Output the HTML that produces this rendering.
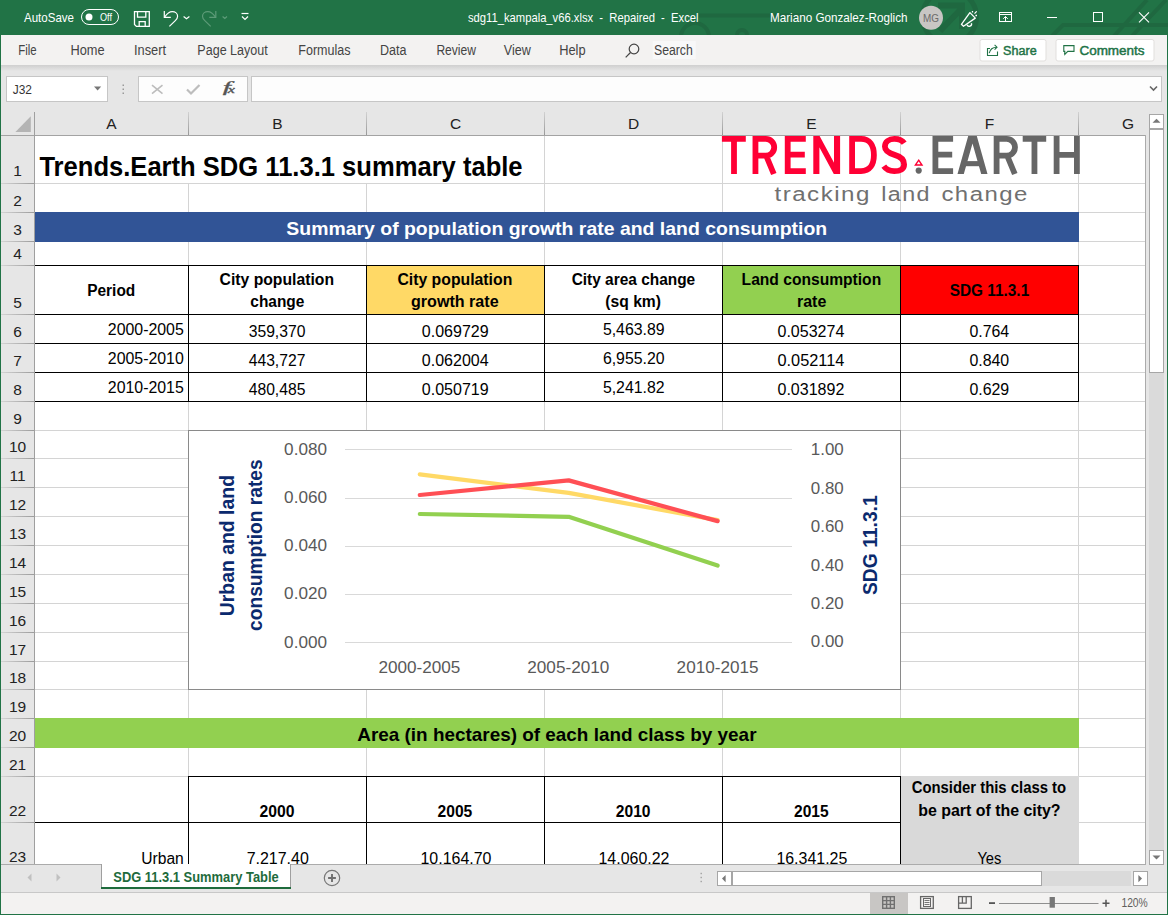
<!DOCTYPE html>
<html><head><meta charset="utf-8"><title>sdg11_kampala_v66.xlsx - Repaired - Excel</title>
<style>html,body{margin:0;padding:0;width:1168px;height:915px;overflow:hidden;background:#e6e6e6;font-family:"Liberation Sans",sans-serif;}</style>
</head><body>
<svg width="1168" height="915" viewBox="0 0 1168 915" style="display:block"><rect x="0" y="0" width="1168" height="915" fill="#e6e6e6" />
<rect x="0" y="0" width="1168" height="35" fill="#217346" />
<g fill="none" stroke="#1f6840"><circle cx="949.5" cy="17" r="27" stroke-width="5"/><path d="M940 31L962 8M938 5.5H962V29" stroke-width="6"/><path d="M1052 36L1063 25H1168M1114 36L1147 0M1132 36L1166 0" stroke-width="4"/><path d="M699 15.5H805" stroke-width="4"/><circle cx="695" cy="37" r="14" stroke-width="4"/><circle cx="742" cy="35" r="5" stroke-width="4"/></g>
<rect x="0" y="35" width="1168" height="30" fill="#f3f2f1" />
<defs><linearGradient id="sh" x1="0" y1="0" x2="0" y2="1"><stop offset="0" stop-color="#cfcfcf"/><stop offset="1" stop-color="#e6e6e6"/></linearGradient></defs>
<rect x="0" y="65" width="1168" height="6" fill="url(#sh)" />
<rect x="0" y="35" width="1" height="880" fill="#217346" />
<rect x="1167" y="35" width="1" height="880" fill="#217346" />
<text x="24" y="22" font-size="13" font-weight="normal" fill="#ffffff" font-family="Liberation Sans" textLength="50.0" lengthAdjust="spacingAndGlyphs" >AutoSave</text>
<rect x="81.5" y="9.5" width="37" height="15" rx="7.5" fill="none" stroke="#ffffff" stroke-width="1"/>
<circle cx="89" cy="17" r="3.5" fill="#ffffff"/>
<text x="100" y="21" font-size="11" font-weight="normal" fill="#ffffff" font-family="Liberation Sans" textLength="12.0" lengthAdjust="spacingAndGlyphs" >Off</text>
<g fill="none" stroke="#ffffff" stroke-width="1.3"><path d="M134.5 11.6H149.3V26.4H136.4L134.5 24.5z"/><path d="M137.5 11.6V17.2H145.8V11.6"/><path d="M139.2 26.4V21.7H145.2V26.4"/></g>
<g fill="none" stroke="#ffffff" stroke-width="1.2"><path d="M164.3 11.1V17.4H170.8"/><path d="M164.8 16.9C167 13.5 169.5 11.6 172.3 11.6C175.2 11.6 177.6 13.6 177.6 16.3C177.6 18.3 176.5 19.5 175.3 20.6L169.4 26.4"/><path d="M183.6 16.5l2.9 2.3l2.9-2.3"/></g>
<g fill="none" stroke="#5d9b78" stroke-width="1.2"><path d="M215.8 11.1V17.4H209.3"/><path d="M215.3 16.9C213.1 13.5 210.6 11.6 207.8 11.6C204.9 11.6 202.5 13.6 202.5 16.3C202.5 18.3 203.6 19.5 204.8 20.6L210.7 26.4"/><path d="M222.6 16.5l2.2 2l2.2-2"/></g>
<g fill="none" stroke="#ffffff" stroke-width="1.2"><path d="M241.5 13.5h7"/><path d="M242 16.5l3 3l3-3"/></g>
<text x="468" y="22" font-size="13" font-weight="normal" fill="#ffffff" font-family="Liberation Sans" textLength="230.5" lengthAdjust="spacingAndGlyphs" xml:space="preserve">sdg11_kampala_v66.xlsx  -  Repaired  -  Excel</text>
<text x="770" y="22" font-size="13" font-weight="normal" fill="#ffffff" font-family="Liberation Sans" textLength="137.5" lengthAdjust="spacingAndGlyphs" >Mariano Gonzalez-Roglich</text>
<circle cx="931" cy="17.7" r="12" fill="#c8c6c4"/>
<text x="923" y="22" font-size="11.5" font-weight="normal" fill="#6b6b6b" font-family="Liberation Sans" textLength="16.0" lengthAdjust="spacingAndGlyphs" >MG</text>
<g fill="none" stroke="#ffffff" stroke-width="1.3" stroke-linejoin="round"><path d="M969.9 12.6L975.3 18.1L963.5 26.3L961.4 24.3z"/><path d="M967 24.8a2.3 2.3 0 0 0 4.4-1.6"/><path d="M972.5 11v1.6M974.5 13.6l2.2-2.2M975.4 15.5h1.6"/></g>
<g fill="none" stroke="#ffffff" stroke-width="1"><rect x="999.5" y="12.5" width="12" height="9"/><path d="M999.5 14.5h12"/><path d="M1005.5 21.5v-5M1003.2 18.8l2.3-2.3l2.3 2.3"/></g>
<rect x="1047" y="17" width="10" height="1" fill="#ffffff" />
<rect x="1093.5" y="12.5" width="9" height="9" fill="none" stroke="#ffffff" stroke-width="1"/>
<path d="M1139 12.3l10 10M1149 12.3l-10 10" stroke="#ffffff" stroke-width="1.1"/>
<text x="18.3" y="55.3" font-size="14" font-weight="normal" fill="#444444" font-family="Liberation Sans" textLength="18.4" lengthAdjust="spacingAndGlyphs" >File</text>
<text x="70.4" y="55.3" font-size="14" font-weight="normal" fill="#444444" font-family="Liberation Sans" textLength="34.2" lengthAdjust="spacingAndGlyphs" >Home</text>
<text x="134" y="55.3" font-size="14" font-weight="normal" fill="#444444" font-family="Liberation Sans" textLength="32.0" lengthAdjust="spacingAndGlyphs" >Insert</text>
<text x="197.3" y="55.3" font-size="14" font-weight="normal" fill="#444444" font-family="Liberation Sans" textLength="70.5" lengthAdjust="spacingAndGlyphs" >Page Layout</text>
<text x="298.3" y="55.3" font-size="14" font-weight="normal" fill="#444444" font-family="Liberation Sans" textLength="52.3" lengthAdjust="spacingAndGlyphs" >Formulas</text>
<text x="380" y="55.3" font-size="14" font-weight="normal" fill="#444444" font-family="Liberation Sans" textLength="26.5" lengthAdjust="spacingAndGlyphs" >Data</text>
<text x="436.4" y="55.3" font-size="14" font-weight="normal" fill="#444444" font-family="Liberation Sans" textLength="39.6" lengthAdjust="spacingAndGlyphs" >Review</text>
<text x="503.8" y="55.3" font-size="14" font-weight="normal" fill="#444444" font-family="Liberation Sans" textLength="27.0" lengthAdjust="spacingAndGlyphs" >View</text>
<text x="559.2" y="55.3" font-size="14" font-weight="normal" fill="#444444" font-family="Liberation Sans" textLength="26.4" lengthAdjust="spacingAndGlyphs" >Help</text>
<g fill="none" stroke="#444" stroke-width="1.2"><circle cx="634" cy="49" r="4.8"/><path d="M630.5 52.5l-4.8 4.8"/></g>
<rect x="652.7" y="41" width="43" height="18" fill="#f8f8f8" />
<text x="654" y="55.3" font-size="14" font-weight="normal" fill="#444444" font-family="Liberation Sans" textLength="38.8" lengthAdjust="spacingAndGlyphs" >Search</text>
<rect x="980" y="39.5" width="66" height="21.5" rx="2" fill="#ffffff" stroke="#e1dfdd"/>
<rect x="1056" y="39.5" width="98" height="21.5" rx="2" fill="#ffffff" stroke="#e1dfdd"/>
<g fill="none" stroke="#217346" stroke-width="1.1"><path d="M990 48.5H987.5V55.5H997.5V51.5"/><path d="M989.2 53.2C990 49.5 992.5 47.2 996.8 47.2"/><path d="M994.6 44.8L997 47.2L994.6 49.6"/></g>
<text x="1003.1" y="54.5" font-size="12.5" font-weight="normal" fill="#217346" font-family="Liberation Sans" textLength="33.6" lengthAdjust="spacingAndGlyphs" stroke="#217346" stroke-width="0.45">Share</text>
<g fill="none" stroke="#217346" stroke-width="1.1"><path d="M1063.8 45.6h10.2v5.8h-6.2l-3 3v-3h-1z"/></g>
<text x="1079.4" y="54.5" font-size="12.5" font-weight="normal" fill="#217346" font-family="Liberation Sans" textLength="65.2" lengthAdjust="spacingAndGlyphs" stroke="#217346" stroke-width="0.45">Comments</text>
<rect x="6.5" y="76.5" width="101" height="25" fill="#ffffff" stroke="#c6c6c6"/>
<text x="12.8" y="94" font-size="13" font-weight="normal" fill="#333333" font-family="Liberation Sans" textLength="19.2" lengthAdjust="spacingAndGlyphs" >J32</text>
<path d="M94 86.5h7.2l-3.6 4z" fill="#777"/>
<rect x="122.5" y="84.5" width="1.5" height="1.5" fill="#9a9a9a" />
<rect x="122.5" y="88.5" width="1.5" height="1.5" fill="#9a9a9a" />
<rect x="122.5" y="92.5" width="1.5" height="1.5" fill="#9a9a9a" />
<rect x="138.5" y="76.5" width="109" height="25" fill="#fdfdfd" stroke="#c6c6c6"/>
<path d="M152 85.2l10.5 8.5M162.5 85.2l-10.5 8.5" stroke="#bdbdbd" stroke-width="1.6"/>
<path d="M187 89.5l4 4l8.5-8.5" fill="none" stroke="#bdbdbd" stroke-width="2.2"/>
<text x="222.8" y="92.3" font-size="14.5" font-weight="normal" fill="#555" font-family="Liberation Serif" textLength="8.2" lengthAdjust="spacingAndGlyphs" font-style="italic" stroke="#555" stroke-width="0.3">f</text>
<text x="227.8" y="92.5" font-size="10" font-weight="normal" fill="#555" font-family="Liberation Serif" textLength="7.2" lengthAdjust="spacingAndGlyphs" font-style="italic" stroke="#555" stroke-width="0.3">x</text>
<rect x="251.5" y="76.5" width="910" height="25" fill="#fdfdfd" stroke="#c6c6c6"/>
<path d="M1150 86.5l3.5 3.5l3.5-3.5" fill="none" stroke="#666" stroke-width="1.6"/>
<defs><linearGradient id="sepg" x1="0" y1="0" x2="0" y2="1"><stop offset="0" stop-color="#d2d2d2"/><stop offset="1" stop-color="#989898"/></linearGradient></defs>
<rect x="188" y="112" width="1" height="23" fill="url(#sepg)" />
<rect x="366" y="112" width="1" height="23" fill="url(#sepg)" />
<rect x="544" y="112" width="1" height="23" fill="url(#sepg)" />
<rect x="722" y="112" width="1" height="23" fill="url(#sepg)" />
<rect x="900" y="112" width="1" height="23" fill="url(#sepg)" />
<rect x="1078" y="112" width="1" height="23" fill="url(#sepg)" />
<rect x="1" y="135" width="1145" height="1" fill="#a3a3a3" />
<rect x="34" y="112" width="1" height="752" fill="#9f9f9f" />
<path d="M30.8 116.3v15.7h-15.4z" fill="#b4b4b4"/>
<text x="111.5" y="129" font-size="15.5" fill="#222" font-family="Liberation Sans" text-anchor="middle">A</text>
<text x="277.5" y="129" font-size="15.5" fill="#222" font-family="Liberation Sans" text-anchor="middle">B</text>
<text x="455.5" y="129" font-size="15.5" fill="#222" font-family="Liberation Sans" text-anchor="middle">C</text>
<text x="633.5" y="129" font-size="15.5" fill="#222" font-family="Liberation Sans" text-anchor="middle">D</text>
<text x="811.5" y="129" font-size="15.5" fill="#222" font-family="Liberation Sans" text-anchor="middle">E</text>
<text x="989.5" y="129" font-size="15.5" fill="#222" font-family="Liberation Sans" text-anchor="middle">F</text>
<text x="1128" y="129" font-size="15.5" fill="#222" font-family="Liberation Sans" text-anchor="middle">G</text>
<rect x="35" y="136" width="1110" height="728" fill="#ffffff" />
<defs><linearGradient id="rsep" x1="0" y1="0" x2="1" y2="0"><stop offset="0" stop-color="#d4d4d4"/><stop offset="1" stop-color="#9c9c9c"/></linearGradient></defs>
<rect x="35" y="183" width="1110" height="1" fill="#d4d4d4" />
<rect x="1" y="183" width="33" height="1" fill="url(#rsep)" />
<rect x="35" y="212" width="1110" height="1" fill="#d4d4d4" />
<rect x="1" y="212" width="33" height="1" fill="url(#rsep)" />
<rect x="35" y="241" width="1110" height="1" fill="#d4d4d4" />
<rect x="1" y="241" width="33" height="1" fill="url(#rsep)" />
<rect x="35" y="265" width="1110" height="1" fill="#d4d4d4" />
<rect x="1" y="265" width="33" height="1" fill="url(#rsep)" />
<rect x="35" y="314" width="1110" height="1" fill="#d4d4d4" />
<rect x="1" y="314" width="33" height="1" fill="url(#rsep)" />
<rect x="35" y="343" width="1110" height="1" fill="#d4d4d4" />
<rect x="1" y="343" width="33" height="1" fill="url(#rsep)" />
<rect x="35" y="372" width="1110" height="1" fill="#d4d4d4" />
<rect x="1" y="372" width="33" height="1" fill="url(#rsep)" />
<rect x="35" y="401" width="1110" height="1" fill="#d4d4d4" />
<rect x="1" y="401" width="33" height="1" fill="url(#rsep)" />
<rect x="35" y="430" width="1110" height="1" fill="#d4d4d4" />
<rect x="1" y="430" width="33" height="1" fill="url(#rsep)" />
<rect x="35" y="458" width="1110" height="1" fill="#d4d4d4" />
<rect x="1" y="458" width="33" height="1" fill="url(#rsep)" />
<rect x="35" y="487" width="1110" height="1" fill="#d4d4d4" />
<rect x="1" y="487" width="33" height="1" fill="url(#rsep)" />
<rect x="35" y="516" width="1110" height="1" fill="#d4d4d4" />
<rect x="1" y="516" width="33" height="1" fill="url(#rsep)" />
<rect x="35" y="545" width="1110" height="1" fill="#d4d4d4" />
<rect x="1" y="545" width="33" height="1" fill="url(#rsep)" />
<rect x="35" y="574" width="1110" height="1" fill="#d4d4d4" />
<rect x="1" y="574" width="33" height="1" fill="url(#rsep)" />
<rect x="35" y="603" width="1110" height="1" fill="#d4d4d4" />
<rect x="1" y="603" width="33" height="1" fill="url(#rsep)" />
<rect x="35" y="632" width="1110" height="1" fill="#d4d4d4" />
<rect x="1" y="632" width="33" height="1" fill="url(#rsep)" />
<rect x="35" y="661" width="1110" height="1" fill="#d4d4d4" />
<rect x="1" y="661" width="33" height="1" fill="url(#rsep)" />
<rect x="35" y="689" width="1110" height="1" fill="#d4d4d4" />
<rect x="1" y="689" width="33" height="1" fill="url(#rsep)" />
<rect x="35" y="718" width="1110" height="1" fill="#d4d4d4" />
<rect x="1" y="718" width="33" height="1" fill="url(#rsep)" />
<rect x="35" y="747" width="1110" height="1" fill="#d4d4d4" />
<rect x="1" y="747" width="33" height="1" fill="url(#rsep)" />
<rect x="35" y="776" width="1110" height="1" fill="#d4d4d4" />
<rect x="1" y="776" width="33" height="1" fill="url(#rsep)" />
<rect x="35" y="822" width="1110" height="1" fill="#d4d4d4" />
<rect x="1" y="822" width="33" height="1" fill="url(#rsep)" />
<rect x="188" y="136" width="1" height="728" fill="#d4d4d4" />
<rect x="366" y="136" width="1" height="728" fill="#d4d4d4" />
<rect x="544" y="136" width="1" height="728" fill="#d4d4d4" />
<rect x="722" y="136" width="1" height="728" fill="#d4d4d4" />
<rect x="900" y="136" width="1" height="728" fill="#d4d4d4" />
<rect x="1078" y="136" width="1" height="728" fill="#d4d4d4" />
<rect x="1145" y="135" width="1" height="730" fill="#ababab" />
<text x="17.5" y="176" font-size="15.5" fill="#222" font-family="Liberation Sans" text-anchor="middle">1</text>
<text x="17.5" y="205.5" font-size="15.5" fill="#222" font-family="Liberation Sans" text-anchor="middle">2</text>
<text x="17.5" y="234.5" font-size="15.5" fill="#222" font-family="Liberation Sans" text-anchor="middle">3</text>
<text x="17.5" y="258.5" font-size="15.5" fill="#222" font-family="Liberation Sans" text-anchor="middle">4</text>
<text x="17.5" y="307.5" font-size="15.5" fill="#222" font-family="Liberation Sans" text-anchor="middle">5</text>
<text x="17.5" y="336.5" font-size="15.5" fill="#222" font-family="Liberation Sans" text-anchor="middle">6</text>
<text x="17.5" y="365.5" font-size="15.5" fill="#222" font-family="Liberation Sans" text-anchor="middle">7</text>
<text x="17.5" y="394.5" font-size="15.5" fill="#222" font-family="Liberation Sans" text-anchor="middle">8</text>
<text x="17.5" y="423.5" font-size="15.5" fill="#222" font-family="Liberation Sans" text-anchor="middle">9</text>
<text x="17.5" y="451.5" font-size="15.5" fill="#222" font-family="Liberation Sans" text-anchor="middle">10</text>
<text x="17.5" y="480.5" font-size="15.5" fill="#222" font-family="Liberation Sans" text-anchor="middle">11</text>
<text x="17.5" y="509.5" font-size="15.5" fill="#222" font-family="Liberation Sans" text-anchor="middle">12</text>
<text x="17.5" y="538.5" font-size="15.5" fill="#222" font-family="Liberation Sans" text-anchor="middle">13</text>
<text x="17.5" y="567.5" font-size="15.5" fill="#222" font-family="Liberation Sans" text-anchor="middle">14</text>
<text x="17.5" y="596.5" font-size="15.5" fill="#222" font-family="Liberation Sans" text-anchor="middle">15</text>
<text x="17.5" y="625.5" font-size="15.5" fill="#222" font-family="Liberation Sans" text-anchor="middle">16</text>
<text x="17.5" y="654.5" font-size="15.5" fill="#222" font-family="Liberation Sans" text-anchor="middle">17</text>
<text x="17.5" y="682.5" font-size="15.5" fill="#222" font-family="Liberation Sans" text-anchor="middle">18</text>
<text x="17.5" y="711.5" font-size="15.5" fill="#222" font-family="Liberation Sans" text-anchor="middle">19</text>
<text x="17.5" y="740.5" font-size="15.5" fill="#222" font-family="Liberation Sans" text-anchor="middle">20</text>
<text x="17.5" y="769.5" font-size="15.5" fill="#222" font-family="Liberation Sans" text-anchor="middle">21</text>
<text x="17.5" y="815.5" font-size="15.5" fill="#222" font-family="Liberation Sans" text-anchor="middle">22</text>
<text x="17.5" y="862" font-size="15.5" fill="#222" font-family="Liberation Sans" text-anchor="middle">23</text>
<rect x="188" y="136" width="1" height="47" fill="#ffffff" />
<rect x="366" y="136" width="1" height="47" fill="#ffffff" />
<rect x="35" y="212" width="1044" height="30" fill="#315496" />
<rect x="366" y="265" width="179" height="50" fill="#ffd966" />
<rect x="722" y="265" width="179" height="50" fill="#92d050" />
<rect x="900" y="265" width="179" height="50" fill="#ff0000" />
<rect x="35" y="718" width="1044" height="30" fill="#92d050" />
<rect x="900" y="776" width="179" height="88" fill="#d9d9d9" />
<rect x="35" y="265" width="1044" height="1" fill="#000000" />
<rect x="35" y="314" width="1044" height="1" fill="#000000" />
<rect x="35" y="343" width="1044" height="1" fill="#000000" />
<rect x="35" y="372" width="1044" height="1" fill="#000000" />
<rect x="35" y="401" width="1044" height="1" fill="#000000" />
<rect x="188" y="265" width="1" height="137" fill="#000000" />
<rect x="366" y="265" width="1" height="137" fill="#000000" />
<rect x="544" y="265" width="1" height="137" fill="#000000" />
<rect x="722" y="265" width="1" height="137" fill="#000000" />
<rect x="900" y="265" width="1" height="137" fill="#000000" />
<rect x="1078" y="265" width="1" height="137" fill="#000000" />
<rect x="188" y="776" width="713" height="1" fill="#000000" />
<rect x="35" y="822" width="866" height="1" fill="#000000" />
<rect x="188" y="776" width="1" height="88" fill="#000000" />
<rect x="366" y="776" width="1" height="88" fill="#000000" />
<rect x="544" y="776" width="1" height="88" fill="#000000" />
<rect x="722" y="776" width="1" height="88" fill="#000000" />
<rect x="900" y="776" width="1" height="88" fill="#000000" />
<text x="39.4" y="176" font-size="27" font-weight="bold" fill="#000000" font-family="Liberation Sans" textLength="483.2" lengthAdjust="spacingAndGlyphs" >Trends.Earth SDG 11.3.1 summary table</text>
<text x="286.3" y="234.6" font-size="19" font-weight="bold" fill="#ffffff" font-family="Liberation Sans" textLength="540.9" lengthAdjust="spacingAndGlyphs" >Summary of population growth rate and land consumption</text>
<text x="87.2" y="296" font-size="16" font-weight="bold" fill="#000000" font-family="Liberation Sans" textLength="48.1" lengthAdjust="spacingAndGlyphs" >Period</text>
<text x="219.6" y="284.6" font-size="16" font-weight="bold" fill="#000000" font-family="Liberation Sans" textLength="114.4" lengthAdjust="spacingAndGlyphs" >City population</text>
<text x="250.3" y="307" font-size="16" font-weight="bold" fill="#000000" font-family="Liberation Sans" textLength="54.1" lengthAdjust="spacingAndGlyphs" >change</text>
<text x="397.4" y="284.6" font-size="16" font-weight="bold" fill="#000000" font-family="Liberation Sans" textLength="114.9" lengthAdjust="spacingAndGlyphs" >City population</text>
<text x="411" y="307" font-size="16" font-weight="bold" fill="#000000" font-family="Liberation Sans" textLength="87.6" lengthAdjust="spacingAndGlyphs" >growth rate</text>
<text x="571.7" y="284.6" font-size="16" font-weight="bold" fill="#000000" font-family="Liberation Sans" textLength="123.5" lengthAdjust="spacingAndGlyphs" >City area change</text>
<text x="605.3" y="307" font-size="16" font-weight="bold" fill="#000000" font-family="Liberation Sans" textLength="55.7" lengthAdjust="spacingAndGlyphs" >(sq km)</text>
<text x="741.6" y="284.6" font-size="16" font-weight="bold" fill="#000000" font-family="Liberation Sans" textLength="139.6" lengthAdjust="spacingAndGlyphs" >Land consumption</text>
<text x="797" y="307" font-size="16" font-weight="bold" fill="#000000" font-family="Liberation Sans" textLength="29.3" lengthAdjust="spacingAndGlyphs" >rate</text>
<text x="949.7" y="295.5" font-size="16" font-weight="bold" fill="#000000" font-family="Liberation Sans" textLength="79.5" lengthAdjust="spacingAndGlyphs" >SDG 11.3.1</text>
<text x="107.8" y="334.5" font-size="16" font-weight="normal" fill="#000000" font-family="Liberation Sans" textLength="76.0" lengthAdjust="spacingAndGlyphs" >2000-2005</text>
<text x="248.7" y="337.2" font-size="16" font-weight="normal" fill="#000000" font-family="Liberation Sans" textLength="56.7" lengthAdjust="spacingAndGlyphs" >359,370</text>
<text x="421.8" y="337.2" font-size="16" font-weight="normal" fill="#000000" font-family="Liberation Sans" textLength="66.8" lengthAdjust="spacingAndGlyphs" >0.069729</text>
<text x="602.9" y="334.5" font-size="16" font-weight="normal" fill="#000000" font-family="Liberation Sans" textLength="61.7" lengthAdjust="spacingAndGlyphs" >5,463.89</text>
<text x="777.5" y="337.2" font-size="16" font-weight="normal" fill="#000000" font-family="Liberation Sans" textLength="66.8" lengthAdjust="spacingAndGlyphs" >0.053274</text>
<text x="969.4" y="337.2" font-size="16" font-weight="normal" fill="#000000" font-family="Liberation Sans" textLength="39.8" lengthAdjust="spacingAndGlyphs" >0.764</text>
<text x="107.8" y="363.5" font-size="16" font-weight="normal" fill="#000000" font-family="Liberation Sans" textLength="76.0" lengthAdjust="spacingAndGlyphs" >2005-2010</text>
<text x="248.7" y="366.2" font-size="16" font-weight="normal" fill="#000000" font-family="Liberation Sans" textLength="56.7" lengthAdjust="spacingAndGlyphs" >443,727</text>
<text x="421.8" y="366.2" font-size="16" font-weight="normal" fill="#000000" font-family="Liberation Sans" textLength="66.8" lengthAdjust="spacingAndGlyphs" >0.062004</text>
<text x="602.9" y="363.5" font-size="16" font-weight="normal" fill="#000000" font-family="Liberation Sans" textLength="61.7" lengthAdjust="spacingAndGlyphs" >6,955.20</text>
<text x="777.5" y="366.2" font-size="16" font-weight="normal" fill="#000000" font-family="Liberation Sans" textLength="66.8" lengthAdjust="spacingAndGlyphs" >0.052114</text>
<text x="969.4" y="366.2" font-size="16" font-weight="normal" fill="#000000" font-family="Liberation Sans" textLength="39.8" lengthAdjust="spacingAndGlyphs" >0.840</text>
<text x="107.8" y="392.5" font-size="16" font-weight="normal" fill="#000000" font-family="Liberation Sans" textLength="76.0" lengthAdjust="spacingAndGlyphs" >2010-2015</text>
<text x="248.7" y="395.2" font-size="16" font-weight="normal" fill="#000000" font-family="Liberation Sans" textLength="56.7" lengthAdjust="spacingAndGlyphs" >480,485</text>
<text x="421.8" y="395.2" font-size="16" font-weight="normal" fill="#000000" font-family="Liberation Sans" textLength="66.8" lengthAdjust="spacingAndGlyphs" >0.050719</text>
<text x="602.9" y="392.5" font-size="16" font-weight="normal" fill="#000000" font-family="Liberation Sans" textLength="61.7" lengthAdjust="spacingAndGlyphs" >5,241.82</text>
<text x="777.5" y="395.2" font-size="16" font-weight="normal" fill="#000000" font-family="Liberation Sans" textLength="66.8" lengthAdjust="spacingAndGlyphs" >0.031892</text>
<text x="969.4" y="395.2" font-size="16" font-weight="normal" fill="#000000" font-family="Liberation Sans" textLength="39.8" lengthAdjust="spacingAndGlyphs" >0.629</text>
<text x="357.3" y="740.6" font-size="19" font-weight="bold" fill="#000000" font-family="Liberation Sans" textLength="399.2" lengthAdjust="spacingAndGlyphs" >Area (in hectares) of each land class by year</text>
<text x="259.4" y="816.8" font-size="16" font-weight="bold" fill="#000000" font-family="Liberation Sans" textLength="35.0" lengthAdjust="spacingAndGlyphs" >2000</text>
<text x="437.6" y="816.8" font-size="16" font-weight="bold" fill="#000000" font-family="Liberation Sans" textLength="34.7" lengthAdjust="spacingAndGlyphs" >2005</text>
<text x="615.8" y="816.8" font-size="16" font-weight="bold" fill="#000000" font-family="Liberation Sans" textLength="34.7" lengthAdjust="spacingAndGlyphs" >2010</text>
<text x="794" y="816.8" font-size="16" font-weight="bold" fill="#000000" font-family="Liberation Sans" textLength="34.5" lengthAdjust="spacingAndGlyphs" >2015</text>
<text x="911.7" y="793.1" font-size="16" font-weight="bold" fill="#000000" font-family="Liberation Sans" textLength="154.4" lengthAdjust="spacingAndGlyphs" >Consider this class to</text>
<text x="918.2" y="816.2" font-size="16" font-weight="bold" fill="#000000" font-family="Liberation Sans" textLength="142.4" lengthAdjust="spacingAndGlyphs" >be part of the city?</text>
<svg x="35" y="822" width="1110" height="42" overflow="hidden"><g transform="translate(-35,-822)">
<text x="141.3" y="863.5" font-size="16" font-weight="normal" fill="#000000" font-family="Liberation Sans" textLength="42.5" lengthAdjust="spacingAndGlyphs" >Urban</text>
<text x="246.7" y="863.5" font-size="16" font-weight="normal" fill="#000000" font-family="Liberation Sans" textLength="62.1" lengthAdjust="spacingAndGlyphs" >7,217.40</text>
<text x="420.5" y="863.5" font-size="16" font-weight="normal" fill="#000000" font-family="Liberation Sans" textLength="70.9" lengthAdjust="spacingAndGlyphs" >10,164.70</text>
<text x="598.5" y="863.5" font-size="16" font-weight="normal" fill="#000000" font-family="Liberation Sans" textLength="70.9" lengthAdjust="spacingAndGlyphs" >14,060.22</text>
<text x="776.4" y="863.5" font-size="16" font-weight="normal" fill="#000000" font-family="Liberation Sans" textLength="70.9" lengthAdjust="spacingAndGlyphs" >16,341.25</text>
<text x="977.4" y="863.5" font-size="16" font-weight="normal" fill="#000000" font-family="Liberation Sans" textLength="24.0" lengthAdjust="spacingAndGlyphs" >Yes</text>
</g></svg>
<g fill="none" stroke="#ff0035" stroke-width="5.8" stroke-linejoin="miter">
<path d="M721.9 138.9H745.8M734 136V174"/>
<path d="M755.45 174V138.9H765.8A8.4 8.4 0 0 1 765.8 155.7H755.45M766.3 156L773.8 174"/>
<path d="M805.8 138.9H787.7V171.1H805.8M787.7 154.6H804.8"/>
<path d="M852.1 174V138.9H861C870 138.9 873.9 145.5 873.9 155C873.9 164.5 870 171.1 861 171.1H852.1"/>
<path d="M904.2 143.2C902 139.8 898.6 138.9 894.4 138.9C888.9 138.9 884.9 141.8 884.9 146.6C884.9 151.6 889.2 153.4 894.6 154.9C900.2 156.5 904.1 158.9 904.1 164.4C904.1 169 900.2 171.2 894.2 171.2C889.6 171.2 886.2 169.6 883.8 166.2"/>
</g>
<path fill="#ff0035" d="M813.3 136H819.4V174H813.3zM834 136H840.1V174H834zM813.3 136H819.6L840.1 174H833.8z"/>
<g fill="none" stroke="#666666" stroke-width="5.8" stroke-linejoin="miter">
<path d="M953.1 138.9H935.4V171.1H953.1M935.4 154.6H952.2"/>
<path d="M996.6 174V138.9H1006.6A8.4 8.4 0 0 1 1006.6 155.7H996.6M1007.3 156L1014.8 174"/>
<path d="M1022.7 138.9H1046.2M1034.45 136V174"/>
<path d="M1056.6 136V174M1076.9 136V174M1056.6 154.9H1076.9"/>
</g>
<path fill="#666666" d="M957.5 174L968.2 136H976.8L987.5 174H981.2L972.5 143.5L963.8 174z"/>
<rect x="962" y="161.1" width="21" height="5.1" fill="#666666"/>
<path d="M918.7 160.2l3.3 4.8h-6.6z" fill="none" stroke="#ff0035" stroke-width="1.4"/>
<circle cx="918.7" cy="170.6" r="3.1" fill="#666666"/>
<text x="774.5" y="200.6" font-size="19.5" font-weight="normal" fill="#707070" font-family="Liberation Sans" textLength="96.4" lengthAdjust="spacingAndGlyphs" letter-spacing="1.2">tracking</text>
<text x="881.2" y="200.6" font-size="19.5" font-weight="normal" fill="#707070" font-family="Liberation Sans" textLength="49.8" lengthAdjust="spacingAndGlyphs" letter-spacing="1.2">land</text>
<text x="941.4" y="200.6" font-size="19.5" font-weight="normal" fill="#707070" font-family="Liberation Sans" textLength="87.5" lengthAdjust="spacingAndGlyphs" letter-spacing="1.2">change</text>
<rect x="188" y="430" width="713" height="260" fill="#8a8a8a" />
<rect x="189" y="431" width="711" height="258" fill="#ffffff" />
<rect x="345" y="449" width="447" height="1" fill="#d9d9d9"/>
<rect x="345" y="498" width="447" height="1" fill="#d9d9d9"/>
<rect x="345" y="546" width="447" height="1" fill="#d9d9d9"/>
<rect x="345" y="594" width="447" height="1" fill="#d9d9d9"/>
<rect x="345" y="642" width="447" height="1" fill="#d9d9d9"/>
<text x="284.1" y="454.7" font-size="16.5" font-weight="normal" fill="#595959" font-family="Liberation Sans" textLength="42.9" lengthAdjust="spacingAndGlyphs" >0.080</text>
<text x="284.1" y="502.95" font-size="16.5" font-weight="normal" fill="#595959" font-family="Liberation Sans" textLength="42.9" lengthAdjust="spacingAndGlyphs" >0.060</text>
<text x="284.1" y="551.2" font-size="16.5" font-weight="normal" fill="#595959" font-family="Liberation Sans" textLength="42.9" lengthAdjust="spacingAndGlyphs" >0.040</text>
<text x="284.1" y="599.45" font-size="16.5" font-weight="normal" fill="#595959" font-family="Liberation Sans" textLength="42.9" lengthAdjust="spacingAndGlyphs" >0.020</text>
<text x="284.1" y="647.7" font-size="16.5" font-weight="normal" fill="#595959" font-family="Liberation Sans" textLength="42.9" lengthAdjust="spacingAndGlyphs" >0.000</text>
<text x="810.8" y="455.20000000000005" font-size="16.5" font-weight="normal" fill="#595959" font-family="Liberation Sans" textLength="32.9" lengthAdjust="spacingAndGlyphs" >1.00</text>
<text x="810.8" y="493.70000000000005" font-size="16.5" font-weight="normal" fill="#595959" font-family="Liberation Sans" textLength="32.9" lengthAdjust="spacingAndGlyphs" >0.80</text>
<text x="810.8" y="532.1" font-size="16.5" font-weight="normal" fill="#595959" font-family="Liberation Sans" textLength="32.9" lengthAdjust="spacingAndGlyphs" >0.60</text>
<text x="810.8" y="571.2" font-size="16.5" font-weight="normal" fill="#595959" font-family="Liberation Sans" textLength="32.9" lengthAdjust="spacingAndGlyphs" >0.40</text>
<text x="810.8" y="609.1" font-size="16.5" font-weight="normal" fill="#595959" font-family="Liberation Sans" textLength="32.9" lengthAdjust="spacingAndGlyphs" >0.20</text>
<text x="810.8" y="647.2" font-size="16.5" font-weight="normal" fill="#595959" font-family="Liberation Sans" textLength="32.9" lengthAdjust="spacingAndGlyphs" >0.00</text>
<text x="378.4" y="673" font-size="16.5" font-weight="normal" fill="#595959" font-family="Liberation Sans" textLength="82.0" lengthAdjust="spacingAndGlyphs" >2000-2005</text>
<text x="527.3" y="673" font-size="16.5" font-weight="normal" fill="#595959" font-family="Liberation Sans" textLength="82.0" lengthAdjust="spacingAndGlyphs" >2005-2010</text>
<text x="676.6" y="673" font-size="16.5" font-weight="normal" fill="#595959" font-family="Liberation Sans" textLength="82.0" lengthAdjust="spacingAndGlyphs" >2010-2015</text>
<polyline points="419.8,474.3 568.7,492.9 717.6,520.1" fill="none" stroke="#ffd966" stroke-width="4.2" stroke-linecap="round" stroke-linejoin="round"/>
<polyline points="419.8,514.0 568.7,516.8 717.6,565.6" fill="none" stroke="#92d050" stroke-width="4.2" stroke-linecap="round" stroke-linejoin="round"/>
<polyline points="419.8,495.0 568.7,480.4 717.6,521.1" fill="none" stroke="#ff4f55" stroke-width="4.2" stroke-linecap="round" stroke-linejoin="round"/>
<g transform="translate(234.3,616.3) rotate(-90)">
<text x="0" y="0" font-size="20" font-weight="bold" fill="#0b2a6e" font-family="Liberation Sans" textLength="141.3" lengthAdjust="spacingAndGlyphs">Urban and land</text>
</g>
<g transform="translate(262.4,630.9) rotate(-90)">
<text x="0" y="0" font-size="20" font-weight="bold" fill="#0b2a6e" font-family="Liberation Sans" textLength="171.5" lengthAdjust="spacingAndGlyphs">consumption rates</text>
</g>
<g transform="translate(877.4,595) rotate(-90)">
<text x="0" y="0" font-size="20" font-weight="bold" fill="#0b2a6e" font-family="Liberation Sans" textLength="99.7" lengthAdjust="spacingAndGlyphs">SDG 11.3.1</text>
</g>
<rect x="1" y="864" width="1166" height="28" fill="#e6e6e6" />
<rect x="1" y="864" width="100" height="1" fill="#ababab" />
<rect x="290" y="864" width="856" height="1" fill="#ababab" />
<path d="M31.5 873.5v8l-4-4z" fill="#c0c0c0"/>
<path d="M56.5 873.5v8l4-4z" fill="#c0c0c0"/>
<rect x="102" y="864" width="188" height="23" fill="#ffffff" />
<rect x="101" y="864" width="1" height="23" fill="#9f9f9f" />
<rect x="290" y="864" width="1" height="23" fill="#9f9f9f" />
<rect x="101" y="887" width="190" height="2" fill="#1e6b3c" />
<text x="113.3" y="881.6" font-size="14" font-weight="bold" fill="#1e6b3c" font-family="Liberation Sans" textLength="165.4" lengthAdjust="spacingAndGlyphs" >SDG 11.3.1 Summary Table</text>
<circle cx="332" cy="878" r="7.7" fill="none" stroke="#777" stroke-width="1.2"/>
<path d="M328.1 878h7.8M332 874.1v7.8" stroke="#707070" stroke-width="1.9"/>
<rect x="700.5" y="872.8" width="1.4" height="1.4" fill="#a0a0a0" />
<rect x="700.5" y="876.8" width="1.4" height="1.4" fill="#a0a0a0" />
<rect x="700.5" y="880.8" width="1.4" height="1.4" fill="#a0a0a0" />
<rect x="1042" y="871" width="89" height="15" fill="#dadada" />
<rect x="717" y="871" width="15" height="15" fill="#a6a6a6" />
<rect x="718" y="872" width="13" height="13" fill="#ffffff" />
<rect x="732" y="871" width="310" height="15" fill="#a6a6a6" />
<rect x="733" y="872" width="308" height="13" fill="#ffffff" />
<rect x="1133" y="871" width="15" height="15" fill="#a6a6a6" />
<rect x="1134" y="872" width="13" height="13" fill="#ffffff" />
<path d="M725.6 875v7.2l-3.6-3.6z" fill="#777"/>
<path d="M1138.4 875v7.2l3.6-3.6z" fill="#777"/>
<rect x="1146" y="112" width="20" height="753" fill="#e6e6e6" />
<rect x="1149" y="373" width="15" height="477" fill="#dadada" />
<rect x="1149" y="114" width="15" height="15" fill="#a6a6a6" />
<rect x="1150" y="115" width="13" height="13" fill="#ffffff" />
<rect x="1149" y="129" width="15" height="244" fill="#a6a6a6" />
<rect x="1150" y="130" width="13" height="242" fill="#ffffff" />
<rect x="1149" y="850" width="15" height="15" fill="#a6a6a6" />
<rect x="1150" y="851" width="13" height="13" fill="#ffffff" />
<path d="M1152.5 122.8h8l-4-4z" fill="#777"/>
<path d="M1152.5 855.4h8l-4 4z" fill="#777"/>
<rect x="1" y="892" width="1166" height="22" fill="#f3f2f1" />
<rect x="1" y="892" width="1166" height="1" fill="#c8c8c8" />
<rect x="870" y="893" width="38" height="21" fill="#c8c6c4" />
<g fill="none" stroke="#707070" stroke-width="1.4"><rect x="882.7" y="896.7" width="11.6" height="11.6"/><path d="M886.6 896.7v11.6M890.4 896.7v11.6M882.7 900.6h11.6M882.7 904.4h11.6"/></g>
<g fill="none" stroke="#666" stroke-width="1.3"><rect x="920.6" y="896.6" width="12.7" height="11.8"/><rect x="923.5" y="898.5" width="7" height="8" stroke-width="1"/><path d="M924.5 900.5h5M924.5 902.5h5M924.5 904.5h5" stroke-width="0.9"/></g>
<g fill="none" stroke="#666" stroke-width="1.3"><rect x="958.6" y="896.6" width="12.7" height="11.8"/><path d="M958.6 903.2h7.6v-6.6M962.4 896.6v6.6"/></g>
<rect x="989" y="902.2" width="6" height="1.8" fill="#555" />
<rect x="999" y="903" width="99.5" height="1" fill="#8f8f8f" />
<rect x="1049.6" y="897" width="5.3" height="10.7" fill="#777" />
<path d="M1102.5 903.2h7M1106 899.7v7" stroke="#555" stroke-width="1.5"/>
<text x="1121.4" y="906.8" font-size="13" font-weight="normal" fill="#605e5c" font-family="Liberation Sans" textLength="26.4" lengthAdjust="spacingAndGlyphs" >120%</text>
<rect x="0" y="914" width="1168" height="1" fill="#217346" /></svg>
</body></html>
